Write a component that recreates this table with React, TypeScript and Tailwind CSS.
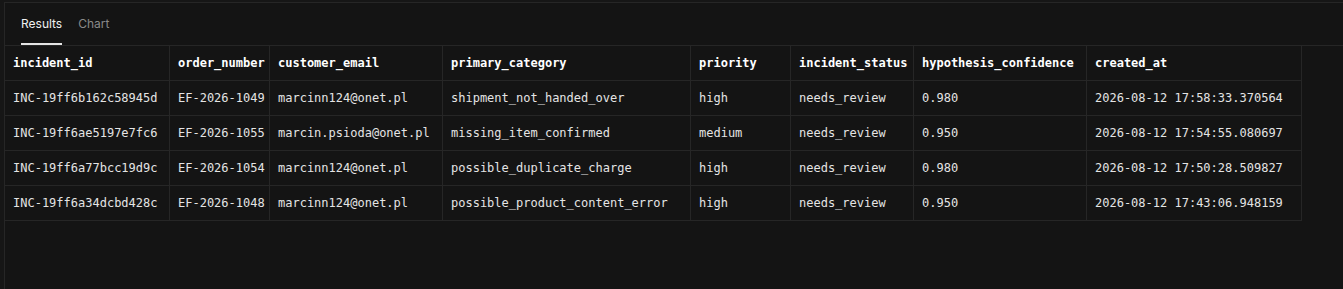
import React from "react";

const cols = [
  { key: "incident_id", w: "w-[165px]" },
  { key: "order_number", w: "w-[100px]" },
  { key: "customer_email", w: "w-[173px]" },
  { key: "primary_category", w: "w-[248px]" },
  { key: "priority", w: "w-[100px]" },
  { key: "incident_status", w: "w-[123px]" },
  { key: "hypothesis_confidence", w: "w-[173px]" },
  { key: "created_at", w: "w-[215px]" },
];

const rows = [
  ["INC-19ff6b162c58945d", "EF-2026-1049", "marcinn124@onet.pl", "shipment_not_handed_over", "high", "needs_review", "0.980", "2026-08-12 17:58:33.370564"],
  ["INC-19ff6ae5197e7fc6", "EF-2026-1055", "marcin.psioda@onet.pl", "missing_item_confirmed", "medium", "needs_review", "0.950", "2026-08-12 17:54:55.080697"],
  ["INC-19ff6a77bcc19d9c", "EF-2026-1054", "marcinn124@onet.pl", "possible_duplicate_charge", "high", "needs_review", "0.980", "2026-08-12 17:50:28.509827"],
  ["INC-19ff6a34dcbd428c", "EF-2026-1048", "marcinn124@onet.pl", "possible_product_content_error", "high", "needs_review", "0.950", "2026-08-12 17:43:06.948159"],
];

const mono = { fontFamily: '"DejaVu Sans Mono", "Liberation Mono", monospace' };

export default function App() {
  return (
    <div className="h-[289px] w-full bg-[#161616] pt-[2px] pl-[4px] overflow-hidden">
      <div className="h-full border-t border-l border-[#262626] bg-[#141414]">
        <div
          className="flex h-[43px] items-stretch gap-4 border-b border-[#262626] pl-4 text-[12px]"
          style={{ fontFamily: 'Inter, "Noto Sans", sans-serif' }}
        >
          <div className="flex flex-col justify-center border-b-2 border-[#e5e5e5] pt-[2px] text-[#f0f0f0]">
            Results
          </div>
          <div className="flex flex-col justify-center pt-[2px] text-[#8a8a8a] border-b-2 border-transparent">
            Chart
          </div>
        </div>
        <div className="text-[12px]" style={mono}>
          <div className="flex">
            {cols.map((c) => (
              <div
                key={c.key}
                className={`${c.w} h-[35px] shrink-0 flex items-center border-r border-b border-[#262626] pl-2 font-bold text-white`}
              >
                {c.key}
              </div>
            ))}
          </div>
          {rows.map((r, i) => (
            <div key={i} className="flex">
              {r.map((v, j) => (
                <div
                  key={j}
                  className={`${cols[j].w} h-[35px] shrink-0 flex items-center border-r border-b border-[#262626] pl-2 text-[#e4e4e4] whitespace-nowrap`}
                >
                  {v}
                </div>
              ))}
            </div>
          ))}
        </div>
      </div>
    </div>
  );
}
